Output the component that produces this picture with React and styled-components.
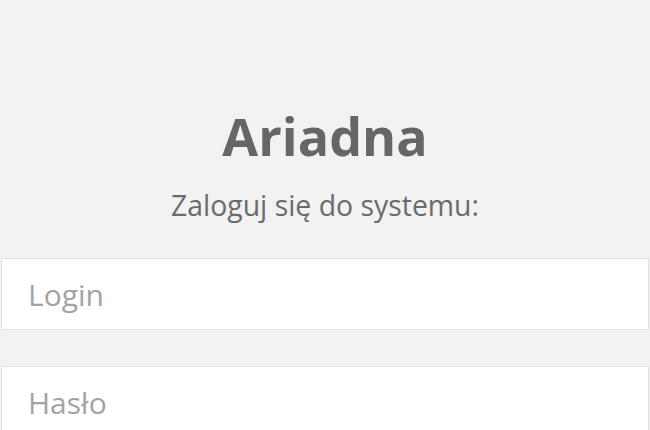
import React from "react";
import styled, { createGlobalStyle } from "styled-components";

const Global = createGlobalStyle`
  html, body {
    margin: 0;
    padding: 0;
    background: #f2f2f2;
    font-family: "Open Sans", "Noto Sans", sans-serif;
  }
  * { box-sizing: border-box; }
`;

const Page = styled.main`
  min-height: 430px;
  padding: 106px 1px 0 1px;
  display: flex;
  flex-direction: column;
`;

const Title = styled.h1`
  margin: 0;
  text-align: center;
  font-size: 52px;
  line-height: 60px;
  font-weight: 700;
  color: #666666;
`;

const Subtitle = styled.p`
  margin: 21px 0 0 0;
  text-align: center;
  font-size: 28.4px;
  line-height: 36px;
  color: #6b6b6b;
`;

const Form = styled.form`
  margin-top: 35px;
  display: flex;
  flex-direction: column;
  gap: 36px;
`;

const Field = styled.input`
  width: 100%;
  height: 72px;
  border: 1px solid #e2e2e2;
  background: #ffffff;
  padding: 0 0 0 26px;
  font-family: "Open Sans", "Noto Sans", sans-serif;
  font-size: 30px;
  color: #555;
  outline: none;
  &::placeholder {
    color: #a3a3a3;
  }
`;

export default function App() {
  return (
    <>
      <Global />
      <Page>
        <Title>Ariadna</Title>
        <Subtitle>Zaloguj się do systemu:</Subtitle>
        <Form onSubmit={(e) => e.preventDefault()}>
          <Field type="text" placeholder="Login" />
          <Field type="password" placeholder="Hasło" />
        </Form>
      </Page>
    </>
  );
}
